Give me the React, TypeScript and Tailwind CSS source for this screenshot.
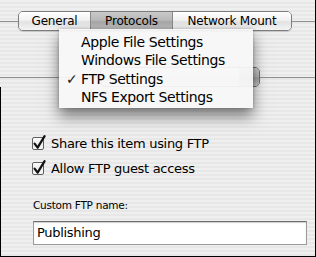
import React from "react";

const font = { fontFamily: '"DejaVu Sans", "Liberation Sans", sans-serif' };

function CheckBox() {
  return (
    <svg width="15" height="16" viewBox="0 0 15 16" className="shrink-0">
      <defs>
        <linearGradient id="cbg" x1="0" y1="0" x2="0" y2="1">
          <stop offset="0" stopColor="#ffffff" />
          <stop offset="0.5" stopColor="#ececec" />
          <stop offset="1" stopColor="#f8f8f8" />
        </linearGradient>
      </defs>
      <rect x="1.5" y="2.5" width="11" height="12" rx="1.5" fill="url(#cbg)" stroke="#5f5f5f" strokeWidth="1" />
      <path d="M3.6 8.6 L6.6 12.6 L13.6 1.2" fill="none" stroke="#111" strokeWidth="2.2" strokeLinecap="round" strokeLinejoin="round" />
    </svg>
  );
}

export default function App() {
  return (
    <div
      className="w-[316px] h-[257px] relative overflow-hidden flex flex-col border-r border-b border-black text-black bg-[repeating-linear-gradient(180deg,#efefef_0px,#efefef_2px,#e7e7e7_2px,#e7e7e7_4px)]"
      style={font}
    >
      {/* Tab row */}
      <div className="mt-[11px] flex items-center h-[20px] shrink-0">
        <div className="w-[18px] h-px bg-[#8f8f8f]" />
        <div className="w-[274px] h-[20px] flex rounded-[5px] border border-[#7d7d7d] overflow-hidden text-[12px] tracking-[-0.2px] leading-[19px] shadow-[0_1px_1px_rgba(0,0,0,0.15)]">
          <div className="w-[71px] text-center bg-[linear-gradient(180deg,#ffffff_0%,#f2f2f2_45%,#e2e2e2_55%,#f4f4f4_100%)]">General</div>
          <div className="w-[82px] text-center border-l border-[#8a8a8a] bg-[linear-gradient(180deg,#c9c9c9_0%,#b9b9b9_45%,#a6a6a6_55%,#c4c4c4_100%)]">Protocols</div>
          <div className="flex-1 text-center border-l border-[#8a8a8a] bg-[linear-gradient(180deg,#ffffff_0%,#f2f2f2_45%,#e2e2e2_55%,#f4f4f4_100%)]">Network Mount</div>
        </div>
        <div className="flex-1 h-px bg-[#8f8f8f]" />
      </div>

      {/* Popup row (mostly behind menu) */}
      <div className="mt-[36px] flex items-center h-[20px] shrink-0">
        <div className="flex-1 h-px bg-[#8f8f8f]" />
        <div className="w-[160px] h-[20px] rounded-[5px] border border-[#6f6f6f] bg-[linear-gradient(180deg,#fafafa_0%,#e6e6e6_50%,#d8d8d8_55%,#eeeeee_100%)] flex justify-end">
          <div className="w-[20px] h-full rounded-r-[4px] bg-[linear-gradient(180deg,#d0d0d0_0%,#b4b4b4_50%,#a4a4a4_55%,#c8c8c8_100%)]" />
        </div>
        <div className="w-[55px] h-px bg-[#8f8f8f]" />
      </div>

      {/* Lower section */}
      <div className="flex-1 flex flex-col border-l border-black pl-[30px] pt-[49px]">
        <div className="flex items-center h-[16px] text-[13px] tracking-[-0.3px] leading-[16px]">
          <div className="-mt-[2px]"><CheckBox /></div>
          <span className="ml-[5px]">Share this item using FTP</span>
        </div>
        <div className="mt-[9px] flex items-center h-[16px] text-[13px] tracking-[-0.3px] leading-[16px]">
          <div className="-mt-[2px]"><CheckBox /></div>
          <span className="ml-[5px]">Allow FTP guest access</span>
        </div>
        <div className="mt-[22px] ml-[2px] text-[10.5px] tracking-[-0.25px] leading-[12px]">Custom FTP name:</div>
        <div className="mt-[10px] ml-[2px] w-[274px] h-[24px] bg-white border border-[#9a9a9a] border-t-[#6e6e6e] shadow-[inset_0_1px_1px_rgba(0,0,0,0.2)] flex items-center pl-[3px] text-[13px] tracking-[-0.3px]">
          Publishing
        </div>
      </div>

      {/* Dropdown menu overlay */}
      <div className="absolute left-[59px] top-[29px] w-[194px] h-[79px] bg-[rgba(247,247,247,0.93)] shadow-[0_8px_14px_rgba(0,0,0,0.5),0_0_3px_rgba(0,0,0,0.25)] pt-[4px] text-[14px] tracking-[-0.4px] leading-[18.3px]">
        <div className="flex"><span className="w-[22px]" />Apple File Settings</div>
        <div className="flex"><span className="w-[22px]" />Windows File Settings</div>
        <div className="flex"><span className="w-[22px] pl-[7px] text-[#222]">✓</span>FTP Settings</div>
        <div className="flex"><span className="w-[22px]" />NFS Export Settings</div>
      </div>
    </div>
  );
}
